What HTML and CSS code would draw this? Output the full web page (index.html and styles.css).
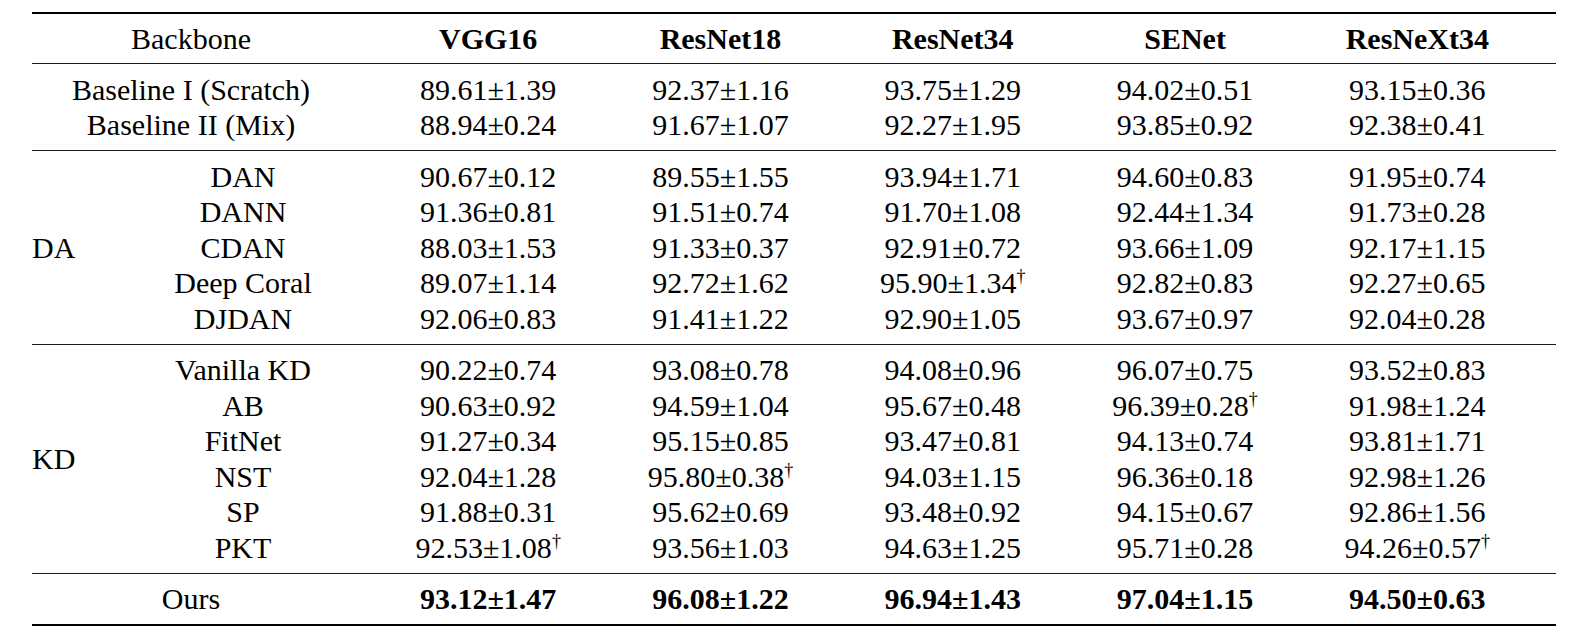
FILE: index.html
```html
<!DOCTYPE html>
<html>
<head>
<meta charset="utf-8">
<link rel="stylesheet" href="styles.css">
</head>
<body>
<table class="results">
  <colgroup>
    <col class="c-group"><col class="c-method">
    <col class="c-data"><col class="c-data"><col class="c-data"><col class="c-data"><col class="c-last">
  </colgroup>
  <thead>
    <tr>
      <th colspan="2" class="span">Backbone</th>
      <th class="b">VGG16</th><th class="b">ResNet18</th><th class="b">ResNet34</th><th class="b">SENet</th><th class="b end">ResNeXt34</th>
    </tr>
  </thead>
  <tbody>
    <tr class="first"><td colspan="2" class="span">Baseline I (Scratch)</td><td>89.61±1.39</td><td>92.37±1.16</td><td>93.75±1.29</td><td>94.02±0.51</td><td class="end">93.15±0.36</td></tr>
    <tr class="last"><td colspan="2" class="span">Baseline II (Mix)</td><td>88.94±0.24</td><td>91.67±1.07</td><td>92.27±1.95</td><td>93.85±0.92</td><td class="end">92.38±0.41</td></tr>
  </tbody>
  <tbody>
    <tr class="first"><td rowspan="5" class="grp">DA</td><td>DAN</td><td>90.67±0.12</td><td>89.55±1.55</td><td>93.94±1.71</td><td>94.60±0.83</td><td class="end">91.95±0.74</td></tr>
    <tr><td>DANN</td><td>91.36±0.81</td><td>91.51±0.74</td><td>91.70±1.08</td><td>92.44±1.34</td><td class="end">91.73±0.28</td></tr>
    <tr><td>CDAN</td><td>88.03±1.53</td><td>91.33±0.37</td><td>92.91±0.72</td><td>93.66±1.09</td><td class="end">92.17±1.15</td></tr>
    <tr><td>Deep Coral</td><td>89.07±1.14</td><td>92.72±1.62</td><td>95.90±1.34<sup class="dag">†</sup></td><td>92.82±0.83</td><td class="end">92.27±0.65</td></tr>
    <tr class="last"><td>DJDAN</td><td>92.06±0.83</td><td>91.41±1.22</td><td>92.90±1.05</td><td>93.67±0.97</td><td class="end">92.04±0.28</td></tr>
  </tbody>
  <tbody>
    <tr class="first"><td rowspan="6" class="grp">KD</td><td>Vanilla KD</td><td>90.22±0.74</td><td>93.08±0.78</td><td>94.08±0.96</td><td>96.07±0.75</td><td class="end">93.52±0.83</td></tr>
    <tr><td>AB</td><td>90.63±0.92</td><td>94.59±1.04</td><td>95.67±0.48</td><td>96.39±0.28<sup class="dag">†</sup></td><td class="end">91.98±1.24</td></tr>
    <tr><td>FitNet</td><td>91.27±0.34</td><td>95.15±0.85</td><td>93.47±0.81</td><td>94.13±0.74</td><td class="end">93.81±1.71</td></tr>
    <tr><td>NST</td><td>92.04±1.28</td><td>95.80±0.38<sup class="dag">†</sup></td><td>94.03±1.15</td><td>96.36±0.18</td><td class="end">92.98±1.26</td></tr>
    <tr><td>SP</td><td>91.88±0.31</td><td>95.62±0.69</td><td>93.48±0.92</td><td>94.15±0.67</td><td class="end">92.86±1.56</td></tr>
    <tr class="last"><td>PKT</td><td>92.53±1.08<sup class="dag">†</sup></td><td>93.56±1.03</td><td>94.63±1.25</td><td>95.71±0.28</td><td class="end">94.26±0.57<sup class="dag">†</sup></td></tr>
  </tbody>
  <tbody class="final">
    <tr class="first last"><td colspan="2" class="span">Ours</td><td class="b">93.12±1.47</td><td class="b">96.08±1.22</td><td class="b">96.94±1.43</td><td class="b">97.04±1.15</td><td class="b end">94.50±0.63</td></tr>
  </tbody>
</table>
</body>
</html>
```

FILE: styles.css
```css
html, body {
  margin: 0;
  padding: 0;
  background: #ffffff;
}

body {
  font-family: "Liberation Serif", "Times New Roman", serif;
  color: #000000;
}

.results {
  margin: 12px 0 0 32px;
  width: 1524px;
  table-layout: fixed;
  border-collapse: collapse;
  font-size: 30px;
  line-height: 35.5px;
}

.c-group { width: 82px; }
.c-method { width: 258px; }
.c-data { width: 232.3px; }
.c-last { width: 254.8px; }

.results th,
.results td {
  padding: 0;
  text-align: center;
  white-space: nowrap;
  font-weight: normal;
}

.results thead {
  border-top: 2px solid #000;
}

.results thead th {
  padding-top: 6.75px;
  padding-bottom: 6.75px;
}

.results tbody {
  border-top: 1px solid #1a1a1a;
}

.results tbody.final {
  border-bottom: 2px solid #000;
}

.results tr.first td {
  padding-top: 7.5px;
}

.results tr.last td {
  padding-bottom: 7.5px;
}

.results .span {
  padding-right: 22px;
}

.results .end {
  padding-right: 22.5px;
}

.results td.grp {
  text-align: left;
  vertical-align: middle;
  padding-top: 7.5px;
  padding-bottom: 7.5px;
}

.results .b {
  font-weight: bold;
}

.dag {
  font-size: 0.6em;
  line-height: 0;
  vertical-align: 0.62em;
}
```
